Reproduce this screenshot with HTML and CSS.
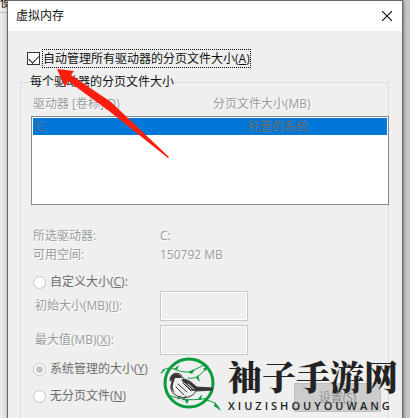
FILE: index.html
```html
<!DOCTYPE html>
<html lang="zh-CN">
<head>
    <meta charset="UTF-8">
    <meta name="viewport" content="width=device-width, initial-scale=1.0">
    <title>虚拟内存</title>
    <link rel="stylesheet" href="styles.css">
</head>
<body>
    <div class="backdrop">使</div>
    <main class="dialog">
        <header class="titlebar">
            <h1>虚拟内存</h1>
            <button class="close-btn" type="button" aria-label="关闭">
                <svg width="10" height="10" viewBox="0 0 10 10"><path d="M0 0L10 10M10 0L0 10" stroke="#111" stroke-width="1.2"/></svg>
            </button>
        </header>

        <form class="content">
            <label class="check-row">
                <input type="checkbox" class="check" checked>
                <span class="focus">自动管理所有驱动器的分页文件大小(<u>A</u>)</span>
            </label>

            <fieldset class="group">
                <legend>每个驱动器的分页文件大小</legend>

                <div class="list-head">
                    <span>驱动器 [卷标](D)</span>
                    <span>分页文件大小(MB)</span>
                </div>
                <div class="drive-list">
                    <div class="drive">
                        <span>C:</span>
                        <span>托管的系统</span>
                    </div>
                </div>

                <div class="info">
                    <span>所选驱动器:</span><span>C:</span>
                    <span>可用空间:</span><span>150792 MB</span>
                </div>

                <label class="radio-row custom">
                    <input type="radio" name="size" class="radio" disabled>
                    <span>自定义大小(<u>C</u>):</span>
                </label>
                <div class="field">
                    <label for="initial">初始大小(MB)(<u>I</u>):</label>
                    <input type="text" id="initial" disabled>
                </div>
                <div class="field">
                    <label for="maximum">最大值(MB)(<u>X</u>):</label>
                    <input type="text" id="maximum" disabled>
                </div>
                <label class="radio-row managed">
                    <input type="radio" name="size" class="radio" checked disabled>
                    <span>系统管理的大小(<u>Y</u>)</span>
                </label>
                <div class="last-row">
                    <label class="radio-row">
                        <input type="radio" name="size" class="radio" disabled>
                        <span>无分页文件(<u>N</u>)</span>
                    </label>
                    <button class="set-btn" type="button" disabled>设置(S)</button>
                </div>
            </fieldset>
        </form>
    </main>

    <svg class="arrow" width="115" height="92" viewBox="0 0 115 92">
        <path d="M2 2L19 4L16 8L56 35L114 90L113 91L54 44L13 14L10 20Z" fill="#fb1e0e"/>
    </svg>

    <div class="watermark">
        <svg class="bird" width="62" height="56" viewBox="0 0 62 56" fill="none" stroke-linecap="round">
            <circle cx="29" cy="27" r="24" stroke="#0a9c3e" stroke-width="3"/>
            <g stroke="#0a9c3e" stroke-width="1">
                <path d="M1 17C4 12 9 11 14 13C23 17 31 17 36 13L46 8M28 22C36 24 42 18 48 10M11 40C22 44 34 45 48 42M45 44C53 45 58 48 60 54"/>
            </g>
            <g fill="#0a9c3e">
                <path d="M14 13L19 9L17 14ZM28 16L35 13L32 18ZM38 19L40 26L36 22ZM43 13L48 9L46 15ZM1 18L3 13L5 14ZM24 43L27 48L29 44ZM38 43L42 38L41 44ZM55 46L60 54L54 50Z"/>
            </g>
            <path d="M10 24C10 18 17 15 21 19L24 23C29 24 33 27 36 31L52 32L53 34L36 35C33 42 21 44 14 38C10 34 10 29 13 26Z" fill="#efefef" stroke="#383435" stroke-width="1"/>
            <path d="M10 23C12 15 20 17 22 22L15 22L13 28C12 31 13 34 15 37C10 33 10 29 12 25ZM21 23C28 23 33 28 37 31L52 32V34L34 35C28 34 25 29 21 23Z" fill="#383435"/>
            <path d="M18 28L27 36M16 31L24 39M23 27L31 35M20 40L18 43M26 40L23 44" stroke="#383435" stroke-width="1"/>
            <path d="M24 27L31 33M28 28L34 33" stroke="#efefef" stroke-width="1"/>
        </svg>
        <div class="brand">
            <strong>袖子手游网</strong>
            <span>XIUZISHOUYOUWANG</span>
        </div>
    </div>
</body>
</html>
```

FILE: styles.css
```css
* {
    margin: 0;
    padding: 0;
    box-sizing: border-box;
}

body {
    position: relative;
    min-height: 100vh;
    padding: 0 7px;
    overflow: hidden;
    background: linear-gradient(to right, #eee, #dcdcdc 7px, #c8c8c8 7px);
    font: 12px/18px "Open Sans", "Noto Sans CJK SC", sans-serif;
    color: #111;
}

/* strip of the window behind the dialog */
.backdrop {
    position: absolute;
    top: 0;
    left: 0;
    right: 0;
    height: 13px;
    border-bottom: 1px solid #bbb;
    line-height: 6px;
    overflow: hidden;
}

.dialog {
    position: relative;
    min-height: 100vh;
    border: 1px solid #6a6a6a;
    border-bottom: 0;
    background: #efefef;
    box-shadow: 1px 0 3px #777;
}

.titlebar {
    display: flex;
    justify-content: space-between;
    align-items: center;
    height: 30px;
    padding: 0 10px 0 8px;
    background: #fff;
}

.titlebar h1 {
    font-size: 12px;
    font-weight: normal;
}

.close-btn {
    display: flex;
    border: 0;
    background: none;
}

.content {
    padding: 18px 13px 0 12px;
}

.check-row {
    display: flex;
    align-items: center;
    gap: 2px;
    padding-left: 7px;
}

.check {
    appearance: none;
    width: 13px;
    height: 13px;
    border: 1px solid #333;
    background: #fff;
}

.check:checked::after {
    content: "";
    display: block;
    width: 9px;
    height: 5px;
    margin: 2px 1px;
    border: solid #222;
    border-width: 0 0 1px 1px;
    transform: rotate(-45deg);
}

.focus {
    border: 1px dotted #000;
    line-height: 17px;
}

.group {
    min-width: 0;
    height: 350px;
    margin-top: 5px;
    padding: 0 0 0 10px;
    border: 1px solid #dcdcdc;
    color: #9b9b9b;
}

.group legend {
    margin-left: -2px;
    padding: 0 1px;
    color: #111;
}

.list-head {
    display: grid;
    grid-template-columns: 180px 1fr;
    padding: 4px 0 3px 2px;
    text-shadow: 1px 1px #fff;
}

.drive-list {
    height: 89px;
    margin-right: -1px;
    padding: 1px;
    border: 1px solid #828790;
    background: #fff;
}

.drive {
    display: grid;
    grid-template-columns: 212px 1fr;
    padding-left: 3px;
    line-height: 17px;
    background: #0078d7;
    color: #6d6d6d;
}

.info {
    display: grid;
    grid-template-columns: 127px 1fr;
    row-gap: 1px;
    padding: 22px 0 0 2px;
    text-shadow: 1px 1px #fff;
}

.radio-row {
    display: flex;
    align-items: center;
    gap: 4px;
    padding-left: 2px;
    color: #6d6d6d;
}

.custom {
    margin-top: 9px;
}

.radio {
    appearance: none;
    width: 13px;
    height: 13px;
    border: 1px solid #c4c4c4;
    border-radius: 50%;
    background: #fff;
}

.radio:checked {
    background: radial-gradient(circle, #c4c4c4 3px, #fff 4px);
}

.field {
    display: grid;
    grid-template-columns: 125px 88px;
    align-items: center;
    margin-bottom: 4px;
    padding-left: 4px;
    text-shadow: 1px 1px #fff;
}

.field input {
    height: 30px;
    border: 1px solid #c8c8c8;
    outline: 1px solid #fff;
    outline-offset: -2px;
    background: #efefef;
}

.managed {
    margin-top: 5px;
}

.last-row {
    display: flex;
    justify-content: space-between;
    padding: 5px 7px 0 0;
}

.last-row .radio-row {
    align-self: flex-start;
    padding-top: 4px;
}

.set-btn {
    width: 87px;
    height: 29px;
    border: 1px solid #bfbfbf;
    background: #ccc;
    font: inherit;
    color: #8f8f8f;
}

.arrow {
    position: absolute;
    top: 67px;
    left: 55px;
}

.watermark {
    position: absolute;
    right: 11px;
    bottom: 8px;
    display: flex;
    gap: 6px;
    color: #222;
}

.bird {
    margin-top: 1px;
}

.brand {
    display: flex;
    flex-direction: column;
    width: 171px;
}

.brand strong {
    font: 900 34px/42px "Noto Serif CJK SC", "Noto Sans CJK SC", serif;
}

.brand span {
    font-size: 11px;
    line-height: 18px;
    font-weight: 600;
    letter-spacing: 3px;
}
```
